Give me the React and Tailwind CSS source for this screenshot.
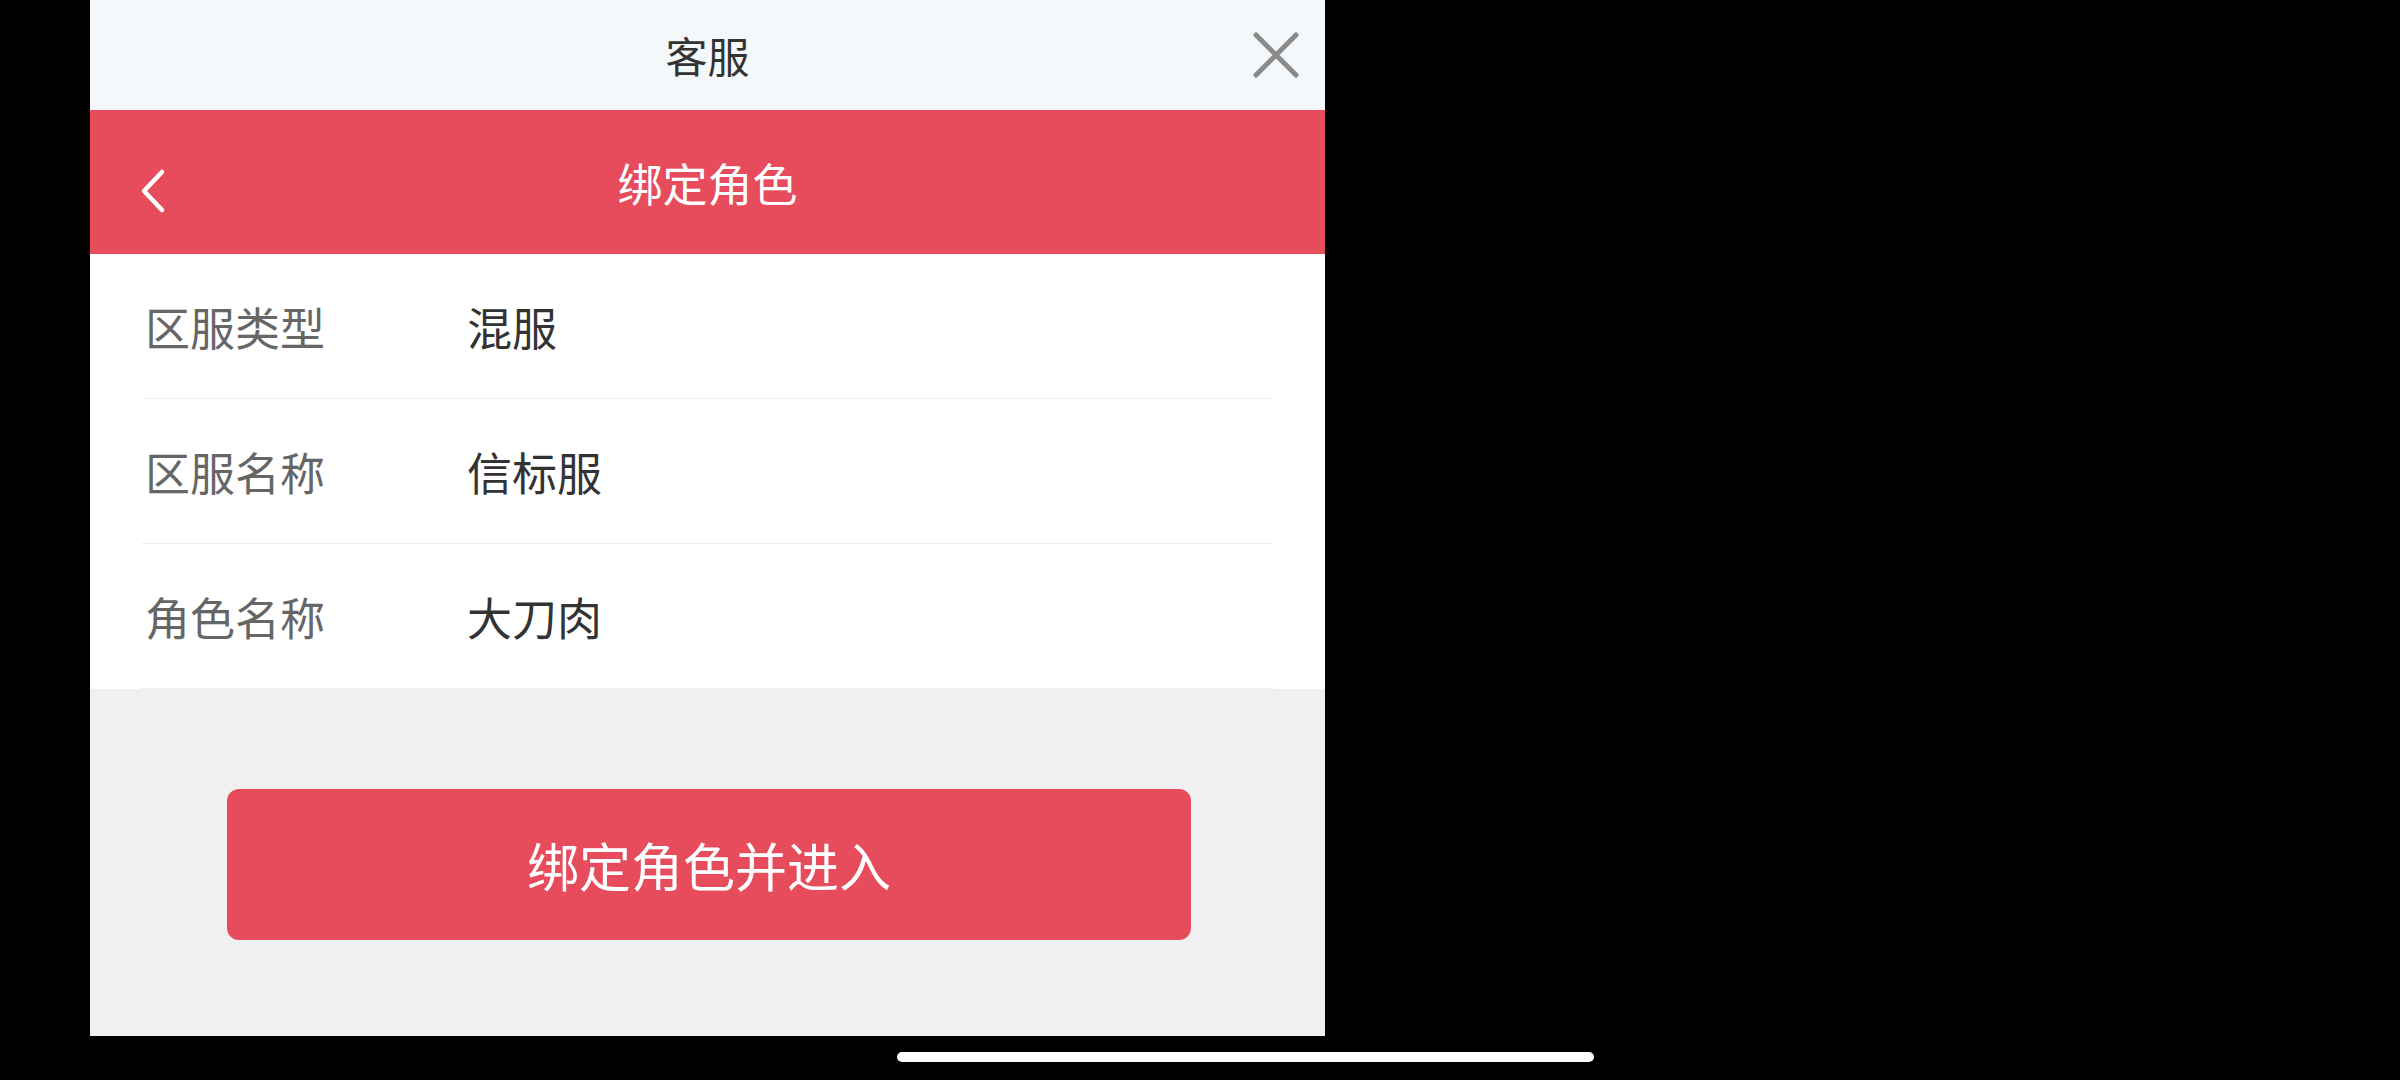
import React from 'react';

const rows = [
  { label: '区服类型', value: '混服' },
  { label: '区服名称', value: '信标服' },
  { label: '角色名称', value: '大刀肉' },
];

const font = { fontFamily: '"Noto Sans CJK SC", "Noto Sans", sans-serif' };

export default function App() {
  return (
    <div className="w-[2400px] h-[1080px] bg-black overflow-hidden" style={font}>
      <div className="ml-[90px] w-[1235px] h-[1036px] flex flex-col bg-[#f0f0f0]">
        {/* top bar */}
        <div className="relative h-[110px] bg-[#f5f8fb] flex items-center justify-center">
          <span className="text-[42px] leading-none text-[#333333]">客服</span>
          <svg className="absolute left-[1162px] top-[31px]" width="48" height="48" viewBox="0 0 48 48">
            <path d="M4 4 L44 44 M44 4 L4 44" stroke="#8a8a8a" strokeWidth="5" strokeLinecap="round" />
          </svg>
        </div>

        {/* red header */}
        <div className="relative h-[144px] bg-[#e64c5c] flex items-center justify-center">
          <svg className="absolute left-[48px] top-[58px]" width="30" height="46" viewBox="0 0 30 46">
            <path d="M24 4 L6 23 L24 42" stroke="#ffffff" strokeWidth="4.5" fill="none" strokeLinecap="round" strokeLinejoin="round" />
          </svg>
          <span className="text-[45px] leading-none text-white">绑定角色</span>
        </div>

        {/* rows */}
        <div className="bg-white px-[52px]">
          {rows.map((r) => (
            <div key={r.label} className="h-[145px] flex items-center border-b border-[#ececec]">
              <span className="w-[325px] pl-[3px] text-[45px] leading-none text-[#666666]">{r.label}</span>
              <span className="text-[45px] leading-none text-[#333333]">{r.value}</span>
            </div>
          ))}
        </div>

        {/* button */}
        <div className="pt-[100px] flex">
          <button className="ml-[137px] w-[964px] h-[151px] rounded-[12px] bg-[#e64c5c] text-white text-[52px] leading-none flex items-center justify-center">
            绑定角色并进入
          </button>
        </div>
      </div>
      <div className="mt-[16px] ml-[897px] w-[697px] h-[10px] rounded-full bg-white" />
    </div>
  );
}
